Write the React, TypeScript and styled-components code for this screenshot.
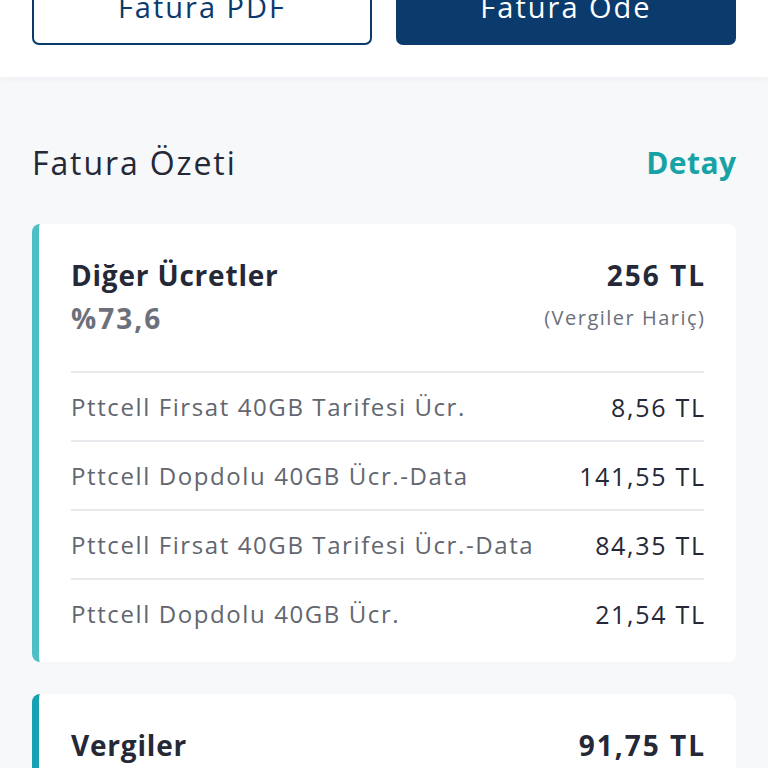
import styled, { createGlobalStyle } from "styled-components";

const GlobalStyle = createGlobalStyle`
    body {
        margin: 0;
        background: #f7f8fa;
        font-family: "Open Sans", "Noto Sans", sans-serif;
        overflow: hidden;
    }
`;

const TopBar = styled.div`
    background: #ffffff;
    display: grid;
    grid-template-columns: 1fr 1fr;
    gap: 24px;
    padding: 0 32px 32px;
    margin-top: -32px;
    box-shadow: 0 2px 6px rgba(20, 30, 60, 0.04);
`;

const ActionButton = styled.button<{ primary?: boolean }>`
    height: 77px;
    border-radius: 7px;
    border: 2px solid #0b3a6c;
    background: ${(p) => (p.primary ? "#0b3a6c" : "#ffffff")};
    color: ${(p) => (p.primary ? "#ffffff" : "#0b3a6c")};
    font-family: inherit;
    font-size: 29px;
    font-weight: 500;
    letter-spacing: 2px;
`;

const Content = styled.main`
    padding: 66px 32px 0;
`;

const SectionHead = styled.div`
    display: flex;
    justify-content: space-between;
    align-items: center;
    line-height: 40px;
    margin-bottom: 41px;
`;

const SectionTitle = styled.h2`
    margin: 0;
    font-size: 32px;
    font-weight: 400;
    letter-spacing: 1.9px;
    color: #252836;
`;

const DetailLink = styled.a`
    font-size: 30px;
    font-weight: 700;
    letter-spacing: 0.4px;
    margin-right: -0.4px;
    color: #17a3a6;
    text-decoration: none;
`;

const Card = styled.section<{ accent: string }>`
    background: #ffffff;
    border-left: 7px solid ${(p) => p.accent};
    border-radius: 8px;
    padding: 33px 32px 15px;
    margin-bottom: 32px;
`;

const CardHead = styled.div`
    display: grid;
    grid-template-columns: 1fr auto;
    row-gap: 7px;
    line-height: 36px;
    padding-bottom: 35px;
    border-bottom: 2px solid #e8e9ed;
`;

const HeadTitle = styled.div`
    font-size: 28px;
    font-weight: 700;
    letter-spacing: 0.8px;
    color: #252836;
`;

const HeadAmount = styled(HeadTitle)`
    text-align: right;
    letter-spacing: 2px;
    margin-right: -2px;
`;

const Percent = styled.div`
    font-size: 28px;
    font-weight: 700;
    letter-spacing: 2px;
    color: #6c707b;
`;

const Note = styled.div`
    font-size: 20px;
    letter-spacing: 1.5px;
    margin-right: -1.5px;
    color: #6c707b;
    text-align: right;
    align-self: center;
`;

const Row = styled.div`
    display: flex;
    justify-content: space-between;
    align-items: center;
    height: 67px;
    & + & {
        border-top: 2px solid #e8e9ed;
    }
`;

const RowLabel = styled.span`
    font-size: 24px;
    letter-spacing: 1.6px;
    color: #62666f;
    font-weight: 400;
`;

const RowValue = styled.span`
    font-size: 25px;
    letter-spacing: 1.7px;
    margin-right: -1.7px;
    color: #252836;
    font-weight: 500;
`;

const items = [
    { label: "Pttcell Firsat 40GB Tarifesi Ücr.", value: "8,56 TL" },
    { label: "Pttcell Dopdolu 40GB Ücr.-Data", value: "141,55 TL" },
    { label: "Pttcell Firsat 40GB Tarifesi Ücr.-Data", value: "84,35 TL" },
    { label: "Pttcell Dopdolu 40GB Ücr.", value: "21,54 TL" },
];

export default function App() {
    return (
        <>
            <GlobalStyle />
            <TopBar>
                <ActionButton>Fatura PDF</ActionButton>
                <ActionButton primary>Fatura Öde</ActionButton>
            </TopBar>
            <Content>
                <SectionHead>
                    <SectionTitle>Fatura Özeti</SectionTitle>
                    <DetailLink href="#">Detay</DetailLink>
                </SectionHead>

                <Card accent="#4dbfc5">
                    <CardHead>
                        <HeadTitle>Diğer Ücretler</HeadTitle>
                        <HeadAmount>256 TL</HeadAmount>
                        <Percent>%73,6</Percent>
                        <Note>(Vergiler Hariç)</Note>
                    </CardHead>
                    {items.map((it) => (
                        <Row key={it.label}>
                            <RowLabel>{it.label}</RowLabel>
                            <RowValue>{it.value}</RowValue>
                        </Row>
                    ))}
                </Card>

                <Card accent="#17a2b4">
                    <CardHead>
                        <HeadTitle>Vergiler</HeadTitle>
                        <HeadAmount>91,75 TL</HeadAmount>
                    </CardHead>
                </Card>
            </Content>
        </>
    );
}
